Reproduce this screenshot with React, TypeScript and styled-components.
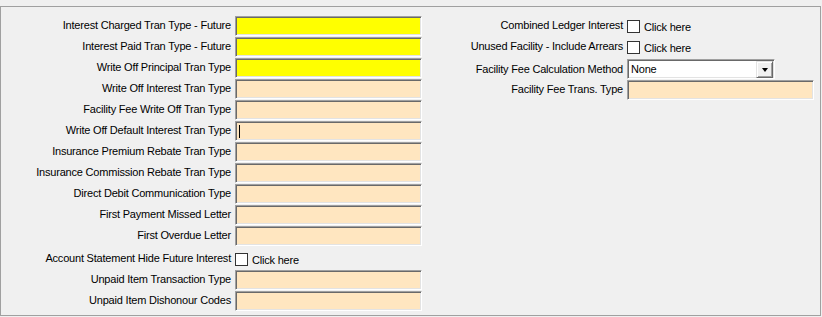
import React from "react";
import styled, { createGlobalStyle } from "styled-components";

const GlobalStyle = createGlobalStyle`
  html, body {
    margin: 0;
    padding: 0;
    background: #f0f0f0;
  }
  body {
    font-family: "Liberation Sans", Arial, sans-serif;
    font-size: 11px;
    letter-spacing: -0.2px;
    color: #000;
  }
`;

const Panel = styled.div`
  box-sizing: border-box;
  width: 821px;
  margin-top: 6px;
  border: 1px solid #a0a0a0;
  padding: 9px 0 3px 0;
  display: flex;
  align-items: flex-start;
`;

const Column = styled.div`
  display: flex;
  flex-direction: column;
`;

const Row = styled.div<{ $mt?: number }>`
  display: flex;
  align-items: flex-start;
  gap: 4px;
  height: 21px;
  margin-top: ${(p) => p.$mt ?? 0}px;
`;

const Label = styled.div<{ $w: number; $pt?: number }>`
  box-sizing: border-box;
  width: ${(p) => p.$w}px;
  height: 20px;
  line-height: 18px;
  padding-top: ${(p) => p.$pt ?? 0}px;
  text-align: right;
  white-space: nowrap;
`;

const Field = styled.div<{ $bg: string; $w?: number }>`
  box-sizing: border-box;
  width: ${(p) => p.$w ?? 187}px;
  height: 20px;
  background: ${(p) => p.$bg};
  border: 1px solid;
  border-color: #a0a0a0 #ffffff #ffffff #a0a0a0;
  box-shadow: inset 1px 1px 0 #696969, inset -1px -1px 0 #e3e3e3;
  display: flex;
  align-items: center;
  padding-left: 2px;
`;

const Caret = styled.span`
  display: block;
  width: 1px;
  height: 13px;
  margin-left: 1px;
  margin-top: 1px;
  background: #000;
`;

const CheckWrap = styled.label`
  display: flex;
  align-items: center;
  gap: 4px;
  height: 21px;
`;

const Box = styled.span`
  box-sizing: border-box;
  display: block;
  width: 13px;
  height: 13px;
  background: #fff;
  border: 1px solid #333;
`;

const CheckText = styled.span`
  line-height: 13px;
  padding-top: 1px;
`;

const Combo = styled.div`
  box-sizing: border-box;
  width: 148px;
  height: 20px;
  background: #fff;
  border: 1px solid;
  border-color: #a0a0a0 #ffffff #ffffff #a0a0a0;
  box-shadow: inset 1px 1px 0 #696969, inset -1px -1px 0 #e3e3e3;
  display: flex;
  align-items: center;
  padding: 1px 1px 1px 2px;
`;

const ComboText = styled.span`
  flex: 1;
  line-height: 16px;
  padding-left: 1px;
`;

const DropButton = styled.span`
  box-sizing: border-box;
  width: 17px;
  height: 17px;
  background: #f0f0f0;
  border: 1px solid;
  border-color: #e3e3e3 #696969 #696969 #e3e3e3;
  box-shadow: inset 1px 1px 0 #ffffff, inset -1px -1px 0 #a0a0a0;
  display: flex;
  align-items: center;
  justify-content: center;
`;

const Arrow = styled.span`
  display: block;
  width: 0;
  height: 0;
  border-left: 3.5px solid transparent;
  border-right: 3.5px solid transparent;
  border-top: 4px solid #000;
  margin-top: 1px;
`;

const YELLOW = "#ffff00";
const PEACH = "#ffe6c0";

type Item =
  | { kind: "field"; label: string; bg: string; caret?: boolean }
  | { kind: "check"; label: string };

const leftItems: Item[] = [
  { kind: "field", label: "Interest Charged Tran Type - Future", bg: YELLOW },
  { kind: "field", label: "Interest Paid Tran Type - Future", bg: YELLOW },
  { kind: "field", label: "Write Off Principal Tran Type", bg: YELLOW },
  { kind: "field", label: "Write Off Interest Tran Type", bg: PEACH },
  { kind: "field", label: "Facility Fee Write Off Tran Type", bg: PEACH },
  { kind: "field", label: "Write Off Default Interest Tran Type", bg: PEACH, caret: true },
  { kind: "field", label: "Insurance Premium Rebate Tran Type", bg: PEACH },
  { kind: "field", label: "Insurance Commission Rebate Tran Type", bg: PEACH },
  { kind: "field", label: "Direct Debit Communication Type", bg: PEACH },
  { kind: "field", label: "First Payment Missed Letter", bg: PEACH },
  { kind: "field", label: "First Overdue Letter", bg: PEACH },
  { kind: "check", label: "Account Statement Hide Future Interest" },
  { kind: "field", label: "Unpaid Item Transaction Type", bg: PEACH },
  { kind: "field", label: "Unpaid Item Dishonour Codes", bg: PEACH },
];

const Check = () => (
  <CheckWrap>
    <Box />
    <CheckText>Click here</CheckText>
  </CheckWrap>
);

export default function App() {
  return (
    <>
      <GlobalStyle />
      <Panel>
        <Column>
          {leftItems.map((it) =>
            it.kind === "field" ? (
              <Row key={it.label}>
                <Label $w={230}>{it.label}</Label>
                <Field $bg={it.bg}>{it.caret && <Caret />}</Field>
              </Row>
            ) : (
              <Row key={it.label} $mt={2}>
                <Label $w={230}>{it.label}</Label>
                <Check />
              </Row>
            )
          )}
        </Column>
        <Column>
          <Row>
            <Label $w={201}>Combined Ledger Interest</Label>
            <Check />
          </Row>
          <Row>
            <Label $w={201}>Unused Facility - Include Arrears</Label>
            <Check />
          </Row>
          <Row $mt={1}>
            <Label $w={201} $pt={1}>
              Facility Fee Calculation Method
            </Label>
            <Combo>
              <ComboText>None</ComboText>
              <DropButton>
                <Arrow />
              </DropButton>
            </Combo>
          </Row>
          <Row>
            <Label $w={201}>Facility Fee Trans. Type</Label>
            <Field $bg={PEACH} />
          </Row>
        </Column>
      </Panel>
    </>
  );
}
